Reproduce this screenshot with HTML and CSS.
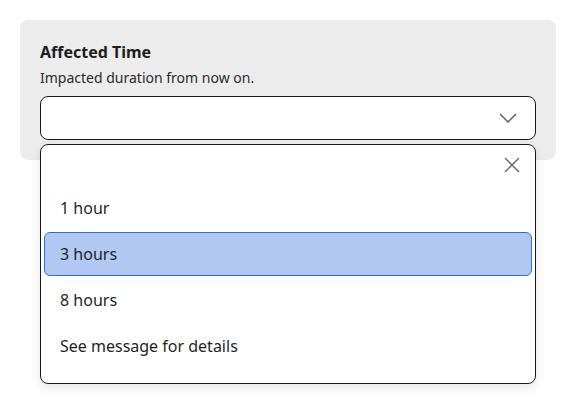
FILE: index.html
```html
<!DOCTYPE html>
<html>
<head>
<meta charset="utf-8">
<link rel="stylesheet" href="styles.css">
</head>
<body>
<div class="panel">
  <div class="title">Affected Time</div>
  <div class="subtitle">Impacted duration from now on.</div>
  <div class="field">
    <div class="select">
      <svg class="chev" width="18" height="10" viewBox="0 0 18 10"><path d="M1 1 L9 9 L17 1" fill="none" stroke="#555" stroke-width="1.3"/></svg>
    </div>
    <div class="menu">
      <div class="menu-head">
        <svg class="close" width="16" height="16" viewBox="0 0 16 16"><path d="M1 1 L15 15 M15 1 L1 15" fill="none" stroke="#666" stroke-width="1.4"/></svg>
      </div>
      <div class="option">1 hour</div>
      <div class="option selected">3 hours</div>
      <div class="option">8 hours</div>
      <div class="option">See message for details</div>
    </div>
  </div>
</div>
</body>
</html>
```

FILE: styles.css
```css
html, body {
  margin: 0;
  padding: 0;
  background: #fff;
  font-family: "Noto Sans", "Open Sans", sans-serif;
  color: #222;
}
body {
  min-height: 414px;
}
.panel {
  margin: 20px;
  padding: 20px 20px 20px 20px;
  background: #ececec;
  border-radius: 8px;
}
.title {
  font-size: 16px;
  font-weight: 700;
  line-height: 24px;
  color: #1e1e1e;
}
.subtitle {
  margin-top: 4px;
  font-size: 14px;
  line-height: 20px;
  color: #2a2a2a;
}
.field {
  position: relative;
  margin-top: 8px;
}
.select {
  height: 42px;
  background: #fff;
  border: 1px solid #1a1a1a;
  border-radius: 8px;
  display: flex;
  align-items: center;
  justify-content: flex-end;
  padding-right: 18px;
}
.chev {
  display: block;
}
.menu {
  position: absolute;
  left: 0;
  right: 0;
  top: 48px;
  height: 240px;
  background: #fff;
  border: 1px solid #1a1a1a;
  border-radius: 8px;
  box-shadow: 0 4px 12px rgba(0,0,0,0.10);
  padding: 0 3px;
  box-sizing: border-box;
}
.menu-head {
  height: 41px;
  display: flex;
  justify-content: flex-end;
  align-items: flex-start;
  padding-top: 12px;
  padding-right: 12px;
  box-sizing: border-box;
}
.close {
  display: block;
}
.option {
  height: 44px;
  margin-bottom: 2px;
  display: flex;
  align-items: center;
  padding-left: 15px;
  font-size: 16px;
  color: #1f1f1f;
  border: 1px solid transparent;
  border-radius: 6px;
  box-sizing: border-box;
}
.option.selected {
  background: #b1c9f2;
  border-color: #2f6bd6;
}
```
